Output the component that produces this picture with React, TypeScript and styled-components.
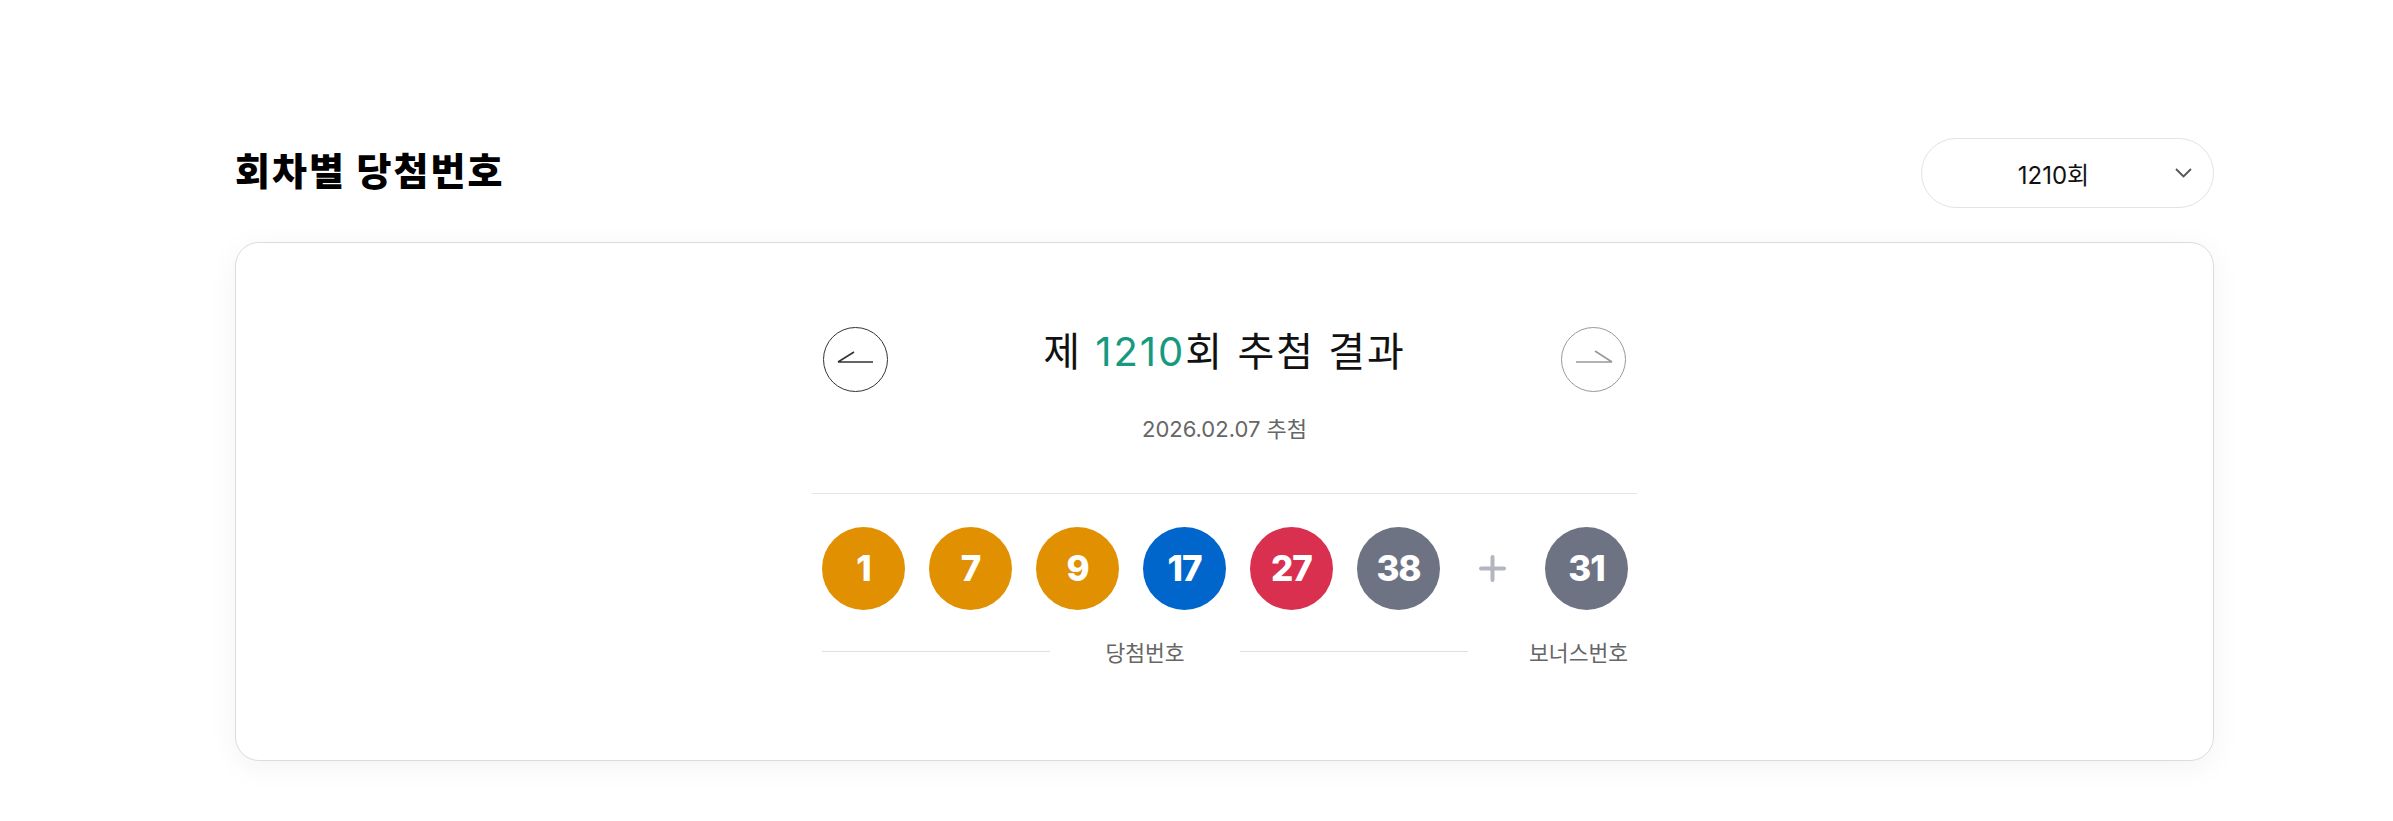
import React from "react";
import styled, { createGlobalStyle } from "styled-components";

const GlobalStyle = createGlobalStyle`
  body {
    margin: 0;
    background: #fff;
    font-family: "Inter", "Noto Sans CJK KR", sans-serif;
    color: #111;
  }
`;

type BallColor = "yellow" | "blue" | "red" | "gray";

const ballColors: Record<BallColor, string> = {
  yellow: "#e09000",
  blue: "#0066cc",
  red: "#d93050",
  gray: "#6e7383",
};

const getColor = (n: number): BallColor => {
  if (n <= 10) return "yellow";
  if (n <= 20) return "blue";
  if (n <= 30) return "red";
  return "gray";
};

const drawNo = 1210;
const drawDate = "2026.02.07";
const numbers = [1, 7, 9, 17, 27, 38];
const bonus = 31;

const App = () => {
  return (
    <>
      <GlobalStyle />
      <Page>
        <Section>
          <HeaderRow>
            <Heading>회차별 당첨번호</Heading>
            <SelectBox type="button">
              <SelectText>{drawNo}회</SelectText>
              <svg width="17" height="10" viewBox="0 0 17 10" fill="none">
                <polyline points="1,1 8.5,8.5 16,1" stroke="#555" strokeWidth="1.8" />
              </svg>
            </SelectBox>
          </HeaderRow>

          <Card>
            <Inner>
              <DrawHeader>
                <NavButton type="button" $tone="dark" aria-label="이전 회차">
                  <svg width="63" height="63" viewBox="0 0 63 63" fill="none">
                    <path d="M14 34 H49 M14 34 L30 24" stroke="#333" strokeWidth="1.6" />
                  </svg>
                </NavButton>
                <DrawTitle>
                  제 <Accent>{drawNo}</Accent>회 추첨 결과
                </DrawTitle>
                <NavButton type="button" $tone="light" aria-label="다음 회차">
                  <svg width="63" height="63" viewBox="0 0 63 63" fill="none">
                    <path d="M14 34 H50 M50 34 L33 23" stroke="#999" strokeWidth="1.6" />
                  </svg>
                </NavButton>
              </DrawHeader>

              <DrawDate>{drawDate} 추첨</DrawDate>
              <Divider />

              <BallRow>
                {numbers.map((n) => (
                  <Ball key={n} $color={getColor(n)}>
                    {n}
                  </Ball>
                ))}
                <Plus>
                  <svg width="27" height="27" viewBox="0 0 27 27" fill="none">
                    <path d="M13.5 2 V25 M2 13.5 H25" stroke="#b3b6bf" strokeWidth="4" strokeLinecap="round" />
                  </svg>
                </Plus>
                <Ball $color={getColor(bonus)}>{bonus}</Ball>
              </BallRow>

              <LabelRow>
                <WinGroup>
                  <Line />
                  <Label>당첨번호</Label>
                  <Line />
                </WinGroup>
                <BonusLabel>보너스번호</BonusLabel>
              </LabelRow>
            </Inner>
          </Card>
        </Section>
      </Page>
    </>
  );
};

export default App;

const Page = styled.div`
  padding: 138px 0 60px 235px;
`;

const Section = styled.section`
  width: 1979px;
`;

const HeaderRow = styled.div`
  display: flex;
  justify-content: space-between;
  align-items: center;
  margin-bottom: 34px;
`;

const Heading = styled.h2`
  margin: 0;
  font-family: "Noto Sans CJK KR", sans-serif;
  font-size: 38px;
  font-weight: 900;
  line-height: 1.2;
  color: #000;
  letter-spacing: 2px;
  transform: translateY(-4px);
`;

const SelectBox = styled.button`
  display: flex;
  align-items: center;
  width: 293px;
  height: 70px;
  padding: 0 21px 0 10px;
  background: #fff;
  border: 1px solid #e3e3e3;
  border-radius: 35px;
  box-sizing: border-box;
  cursor: pointer;
`;

const SelectText = styled.span`
  flex: 1;
  text-align: center;
  font-family: "Inter", "Noto Sans CJK KR", sans-serif;
  font-size: 24px;
  color: #111;
`;

const Card = styled.div`
  display: flex;
  justify-content: center;
  padding: 84px 0 93px;
  border: 1px solid #dcdcdc;
  border-radius: 24px;
  background: #fff;
  box-shadow: 0 6px 30px rgba(0, 0, 0, 0.05);
`;

const Inner = styled.div`
  width: 825px;
  display: flex;
  flex-direction: column;
`;

const DrawHeader = styled.div`
  display: flex;
  justify-content: space-between;
  align-items: center;
  padding: 0 11px;
`;

const NavButton = styled.button<{ $tone: "dark" | "light" }>`
  width: 65px;
  height: 65px;
  padding: 0;
  border-radius: 50%;
  border: 1px solid ${(p) => (p.$tone === "dark" ? "#333" : "#999")};
  background: #fff;
  display: flex;
  cursor: pointer;
`;

const DrawTitle = styled.h3`
  margin: 0 0 16px;
  font-size: 40px;
  font-weight: 400;
  line-height: 1.2;
  color: #111;
  letter-spacing: 2px;
`;

const Accent = styled.span`
  color: #159a80;
`;

const DrawDate = styled.p`
  margin: 22px 0 0;
  text-align: center;
  font-size: 22px;
  line-height: 1.4;
  color: #666;
`;

const Divider = styled.hr`
  margin: 48px 0 0;
  border: 0;
  height: 1px;
  background: #e5e5e5;
`;

const BallRow = styled.div`
  display: flex;
  align-items: center;
  gap: 24px;
  margin-top: 33px;
  padding: 0 9px 0 10px;
`;

const Ball = styled.div<{ $color: BallColor }>`
  width: 83px;
  height: 83px;
  border-radius: 50%;
  background: ${(p) => ballColors[p.$color]};
  color: #fff;
  display: flex;
  align-items: center;
  justify-content: center;
  font-size: 35px;
  font-weight: 800;
  letter-spacing: -1px;
`;

const Plus = styled.div`
  display: flex;
  margin: 0 15px;
`;

const LabelRow = styled.div`
  display: flex;
  align-items: center;
  margin-top: 27px;
  padding: 0 9px 0 10px;
`;

const WinGroup = styled.div`
  width: 646px;
  display: flex;
  align-items: center;
  gap: 55px;
`;

const Line = styled.div`
  flex: 1;
  height: 1px;
  background: #e0e0e0;
`;

const Label = styled.span`
  font-family: "Noto Sans CJK KR", sans-serif;
  font-size: 21.5px;
  line-height: 1.4;
  color: #666;
`;

const BonusLabel = styled(Label)`
  margin-left: auto;
`;
